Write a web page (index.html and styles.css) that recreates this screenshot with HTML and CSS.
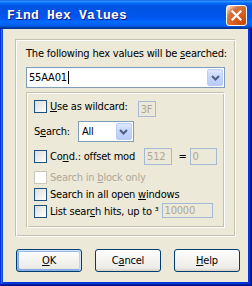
FILE: index.html
```html
<!DOCTYPE html>
<html>
<head>
<meta charset="utf-8">
<link rel="stylesheet" href="styles.css">
</head>
<body>
<div class="window">
  <div class="titlebar">
    <span class="title">Find Hex Values</span>
    <span class="close"><svg width="13" height="13" viewBox="0 0 13 13"><path d="M2.5 2.5 L10.5 10.5 M10.5 2.5 L2.5 10.5" stroke="#fff" stroke-width="2.2" stroke-linecap="square"/></svg></span>
  </div>
  <div class="client">
    <div class="panel">
      <div class="prompt">The following hex values will be <u>s</u>earched:</div>
      <div class="combo">
        <span class="combo-text">55AA01<span class="caret"></span></span>
        <span class="ddbtn"><svg width="9" height="6" viewBox="0 0 9 6"><polyline points="1,1 4.5,4.5 8,1" fill="none" stroke="#4D6185" stroke-width="2"/></svg></span>
      </div>
      <div class="group">
        <div class="row row1">
          <span class="check"></span>
          <span class="label"><u>U</u>se as wildcard:</span>
          <span class="field f-wild">3F</span>
        </div>
        <div class="row row2">
          <span class="label">S<u>e</u>arch:</span>
          <span class="select">
            <span class="select-text">All</span>
            <span class="ddbtn small"><svg width="9" height="6" viewBox="0 0 9 6"><polyline points="1,1 4.5,4.5 8,1" fill="none" stroke="#4D6185" stroke-width="2"/></svg></span>
          </span>
        </div>
        <div class="row row3">
          <span class="check"></span>
          <span class="label">Co<u>n</u>d.: offset mod</span>
          <span class="field f-mod">512</span>
          <span class="eq">=</span>
          <span class="field f-zero">0</span>
        </div>
        <div class="row row4">
          <span class="check disabled"></span>
          <span class="label disabled">Search in <u>b</u>lock only</span>
        </div>
        <div class="row row5">
          <span class="check"></span>
          <span class="label">Search in all open <u>w</u>indows</span>
        </div>
        <div class="row row6">
          <span class="check"></span>
          <span class="label">List sear<u>c</u>h hits, up to ³</span>
          <span class="field f-hits">10000</span>
        </div>
      </div>
    </div>
    <div class="buttons">
      <span class="btn default"><u>O</u>K</span>
      <span class="btn">C<u>a</u>ncel</span>
      <span class="btn"><u>H</u>elp</span>
    </div>
  </div>
</div>
</body>
</html>
```

FILE: styles.css
```css
html, body {
  margin: 0;
  padding: 0;
  background: #ECE9D8;
}
.window {
  width: 252px;
  height: 286px;
  box-sizing: border-box;
  background: #0831D9;
  box-shadow: inset -1px -1px #00138c, inset 1px 1px #0831d9, inset -2px -2px #001ea0, inset 2px 2px #166aee, inset -3px -3px #003bda, inset 3px 3px #0855dd;
  display: flex;
  flex-direction: column;
  font-family: "DejaVu Sans Condensed", "DejaVu Sans", sans-serif;
  font-size: 11px;
  letter-spacing: -0.2px;
  color: #000;
}
.titlebar {
  height: 29px;
  flex: none;
  display: flex;
  align-items: flex-start;
  background: linear-gradient(180deg, #0058ee 0%, #3a93ff 4%, #288eff 6%, #127dff 8%, #036ffc 10%, #0262ee 14%, #0057e5 20%, #0054e3 24%, #0055eb 56%, #005bf5 66%, #026afe 76%, #0062ef 86%, #0052d6 92%, #0040ab 94%, #003092 100%);
}
.title {
  margin: 8px 0 0 7px;
  font-family: "Liberation Mono", "DejaVu Sans Mono", monospace;
  font-weight: bold;
  font-size: 13px;
  line-height: 16px;
  color: #fff;
  text-shadow: 1px 1px #0a1883;
  letter-spacing: 0.2px;
}
.close {
  margin: 5px 5px 0 auto;
  width: 21px;
  height: 21px;
  box-sizing: border-box;
  border: 1px solid #fff;
  border-radius: 3px;
  background: radial-gradient(circle at 90% 90%, #cc4600 0%, #dc6527 55%, #cd7546 70%, #ffccb2 90%, #fff 100%);
  display: flex;
  align-items: center;
  justify-content: center;
}
.client {
  flex: 1;
  margin: 0 4px 4px 3px;
  background: #ECE9D8;
  display: flex;
  flex-direction: column;
}
.panel, .group {
  box-sizing: border-box;
  border: 1px solid;
  border-color: #c4c1ae #fff #fff #c4c1ae;
  box-shadow: inset 1px 1px #fff, inset -1px -1px #c4c1ae;
}
.panel {
  margin: 10px 0 0 12px;
  width: 221px;
  height: 198px;
  padding: 7px 10px 0 10px;
  display: flex;
  flex-direction: column;
}
.prompt {
  height: 13px;
  line-height: 13px;
  white-space: nowrap;
}
.combo {
  margin-top: 7px;
  height: 21px;
  box-sizing: border-box;
  border: 1px solid #7F9DB9;
  background: #fff;
  display: flex;
  align-items: center;
  padding: 0 1px 0 2px;
}
.combo-text {
  flex: 1;
  display: flex;
  align-items: center;
  line-height: 13px;
}
.caret {
  width: 1px;
  height: 13px;
  background: #000;
  margin-left: 1px;
}
.ddbtn {
  width: 16px;
  height: 17px;
  box-sizing: border-box;
  border: 1px solid #b9cdf7;
  border-radius: 2px;
  background: linear-gradient(180deg, #dfe8fd 0%, #c8d7fc 40%, #b8cbf8 100%);
  display: flex;
  align-items: center;
  justify-content: center;
}
.ddbtn svg { margin-top: 1px; }
.group {
  margin-top: 4px;
  height: 136px;
  padding: 6px 7px 0 7px;
  display: flex;
  flex-direction: column;
}
.row {
  display: flex;
  align-items: flex-start;
  white-space: nowrap;
}
.label {
  line-height: 13px;
  margin-left: 3px;
}
.label.disabled { color: #ACA899; }
.check {
  flex: none;
  width: 13px;
  height: 13px;
  box-sizing: border-box;
  border: 1px solid #1C5180;
  background: linear-gradient(135deg, #dcdcd7 0%, #fff 100%);
}
.check.disabled {
  border-color: #CAC8BB;
  background: #fff;
}
.field {
  box-sizing: border-box;
  border: 1px solid #a5b9d3;
  background: #ECE9D8;
  color: #ACA899;
  padding-left: 2px;
  display: flex;
  align-items: center;
  line-height: 13px;
}
.row1 { height: 19px; }
.row1 .check { margin-top: 1px; }
.row1 .label { margin-top: 1px; }
.f-wild { width: 18px; height: 16px; margin: 2px 0 0 10px; }
.row2 { height: 21px; margin-top: 3px; align-items: center; }
.row2 .label { margin-left: 0; }
.select {
  width: 56px;
  height: 21px;
  margin-left: 8px;
  box-sizing: border-box;
  border: 1px solid #7F9DB9;
  background: #fff;
  display: flex;
  align-items: center;
  padding: 0 1px 0 3px;
}
.select-text { flex: 1; line-height: 13px; }
.row3 { height: 17px; margin-top: 6px; }
.row3 .check, .row3 .label { margin-top: 2px; }
.f-mod { width: 31px; height: 17px; margin-left: 9px; }
.eq { line-height: 13px; margin: 2px 3px 0 6px; }
.f-zero { width: 30px; height: 17px; }
.row4 { height: 13px; margin-top: 6px; }
.row5 { height: 13px; margin-top: 4px; }
.row6 { height: 15px; margin-top: 2px; }
.row6 .check, .row6 .label { margin-top: 2px; }
.f-hits { width: 51px; height: 15px; margin-left: 3px; }
.buttons {
  margin-top: 12px;
  padding-left: 13px;
  display: flex;
  gap: 13px;
}
.btn {
  width: 66px;
  height: 23px;
  box-sizing: border-box;
  border: 1px solid #003c74;
  border-radius: 3px;
  background: linear-gradient(180deg, #fff, #ecebe6 86%, #d6d0c5);
  display: flex;
  align-items: center;
  justify-content: center;
  line-height: 13px;
}
.btn.default {
  box-shadow: inset -1px 1px #cee7ff, inset 1px 2px #98b8ea, inset -2px 2px #bcd4f6, inset 1px -1px #89ade4, inset 2px -2px #89ade4;
}
```
